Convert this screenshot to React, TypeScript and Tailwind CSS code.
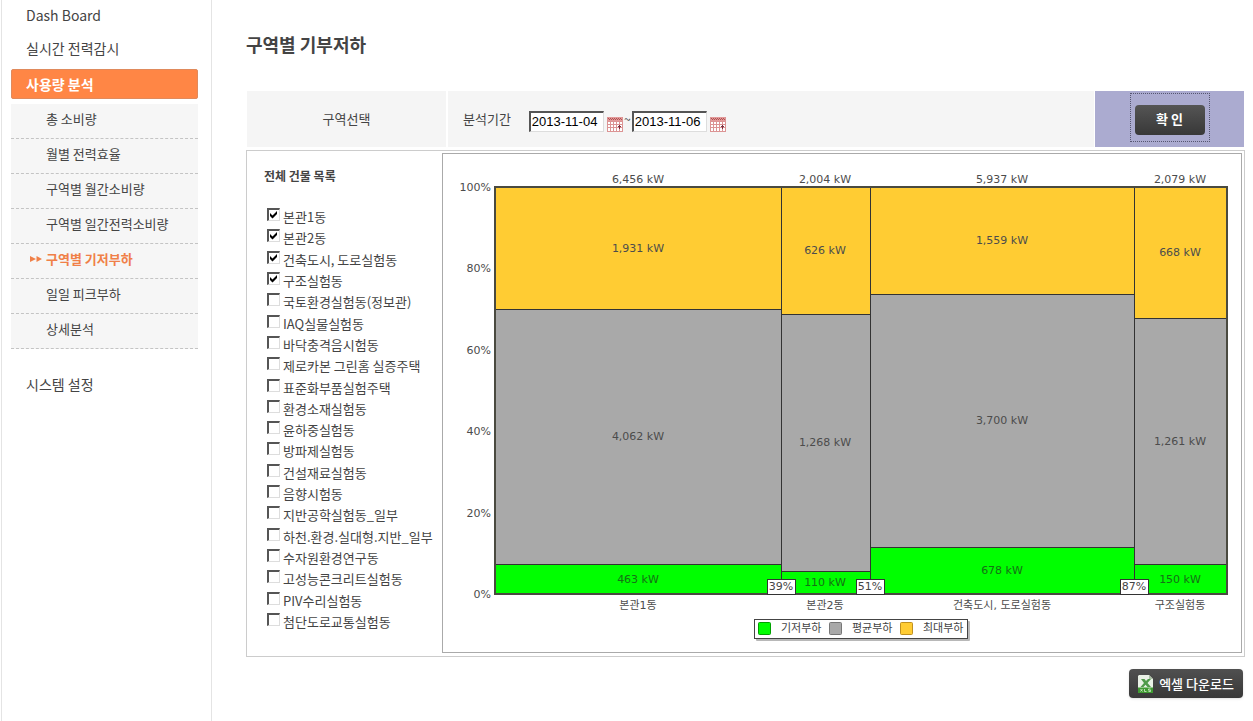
import { useState } from 'react';

type Area = { name: string; base: number; avg: number; max: number };

const AREAS: Area[] = [
  { name: '본관1동', base: 463, avg: 4062, max: 1931 },
  { name: '본관2동', base: 110, avg: 1268, max: 626 },
  { name: '건축도시, 도로실험동', base: 678, avg: 3700, max: 1559 },
  { name: '구조실험동', base: 150, avg: 1261, max: 668 },
];

const BUILDINGS = [
  '본관1동',
  '본관2동',
  '건축도시, 도로실험동',
  '구조실험동',
  '국토환경실험동(정보관)',
  'IAQ실물실험동',
  '바닥충격음시험동',
  '제로카본 그린홈 실증주택',
  '표준화부품실험주택',
  '환경소재실험동',
  '윤하중실험동',
  '방파제실험동',
  '건설재료실험동',
  '음향시험동',
  '지반공학실험동_일부',
  '하천.환경.실대형.지반_일부',
  '수자원환경연구동',
  '고성능콘크리트실험동',
  'PIV수리실험동',
  '첨단도로교통실험동',
];

const SUBMENU = [
  '총 소비량',
  '월별 전력효율',
  '구역별 월간소비량',
  '구역별 일간전력소비량',
  '구역별 기저부하',
  '일일 피크부하',
  '상세분석',
];

const LEGEND = [
  { label: '기저부하', fill: '#00ff00', stroke: '#00a000' },
  { label: '평균부하', fill: '#a9a9a9', stroke: '#777777' },
  { label: '최대부하', fill: '#ffcc33', stroke: '#c09020' },
];

const PLOT = { left: 52, top: 33, width: 732, height: 407 };

const kw = (n: number) => `${n.toLocaleString('en-US')} kW`;

function LoadChart() {
  const bottom = PLOT.top + PLOT.height;
  const right = PLOT.left + PLOT.width;
  const totals = AREAS.map((a) => a.base + a.avg + a.max);
  const sum = totals.reduce((a, b) => a + b, 0);
  let running = 0;
  const columns = AREAS.map((area, i) => {
    const x0 = Math.floor(PLOT.left + (running / sum) * PLOT.width);
    running += totals[i];
    const x1 = Math.floor(PLOT.left + (running / sum) * PLOT.width);
    const yMax = Math.round(PLOT.top + (area.max / totals[i]) * PLOT.height);
    const yBase = Math.floor(bottom - (area.base / totals[i]) * PLOT.height);
    return { area, total: totals[i], share: Math.round((running / sum) * 100), x0, x1, mid: Math.floor((x0 + x1) / 2), yMax, yBase };
  });

  return (
    <svg
      viewBox="0 0 798 498"
      className="block w-full font-['DejaVu_Sans','Noto_Sans_CJK_KR',sans-serif] text-[11px]"
      role="img"
      aria-label="구역별 기저부하"
    >
      {columns.map((c) => (
        <g key={c.area.name}>
          <g stroke="#333333" strokeWidth="1" shapeRendering="crispEdges">
            <rect x={c.x0} y={PLOT.top} width={c.x1 - c.x0} height={c.yMax - PLOT.top} fill="#ffcc33" />
            <rect x={c.x0} y={c.yMax} width={c.x1 - c.x0} height={c.yBase - c.yMax} fill="#a9a9a9" />
            <rect x={c.x0} y={c.yBase} width={c.x1 - c.x0} height={bottom - c.yBase} fill="#00ff00" />
          </g>
          <g textAnchor="middle" fill="#4c4c4c">
            <text x={c.mid} y={PLOT.top - 4}>{kw(c.total)}</text>
            <text x={c.mid} y={Math.floor((PLOT.top + c.yMax) / 2) + 4}>{kw(c.area.max)}</text>
            <text x={c.mid} y={Math.floor((c.yMax + c.yBase) / 2) + 4}>{kw(c.area.avg)}</text>
            <text x={c.mid} y={Math.floor((c.yBase + bottom) / 2) + 4} fill="#167016">{kw(c.area.base)}</text>
            <text x={c.mid} y={bottom + 15}>{c.area.name}</text>
          </g>
        </g>
      ))}
      <rect x={PLOT.left} y={PLOT.top} width={PLOT.width} height={PLOT.height} fill="none" stroke="#4a4a40" strokeWidth="2" shapeRendering="crispEdges" />
      {[0, 20, 40, 60, 80, 100].map((p) => (
        <text key={p} x={PLOT.left - 4} y={Math.round(bottom - (p / 100) * PLOT.height) + 4} textAnchor="end" fill="#4c4c4c">
          {p}%
        </text>
      ))}
      {columns.filter((c) => c.x1 < right).map((c) => (
        <g key={c.share}>
          <rect x={c.x1 - 14} y={bottom - 15} width="28" height="15" fill="#ffffff" stroke="#333333" shapeRendering="crispEdges" />
          <text x={c.x1} y={bottom - 4} textAnchor="middle" fill="#444444">{c.share}%</text>
        </g>
      ))}
      <rect x="313" y="467" width="214" height="20" rx="1" fill="#b8b8b8" />
      <rect x="311.5" y="465.5" width="213" height="19" fill="#ffffff" stroke="#444444" />
      {LEGEND.map((l, i) => (
        <g key={l.label}>
          <rect x={315.5 + i * 71} y="468.5" width="12" height="12" rx="1" fill={l.fill} stroke={l.stroke} />
          <text x={338 + i * 71} y="478" fill="#444444">{l.label}</text>
        </g>
      ))}
    </svg>
  );
}

function CalendarIcon() {
  return (
    <svg width="16" height="16" viewBox="0 0 16 16" shapeRendering="crispEdges" aria-hidden="true">
      <rect x="0" y="1" width="16" height="15" fill="#fff" />
      <rect x="0" y="1" width="16" height="4" fill="#e39a9a" />
      <path d="M1 2.5h14M0 3.5h15" stroke="#b05252" strokeDasharray="1 1" />
      <path d="M.5 1v15M3.5 5v10M6.5 5v10M9.5 5v10M12.5 5v10M15.5 1v15M0 5.5h16M0 8.5h16M0 11.5h16M0 15.5h16" stroke="#dc9494" fill="none" />
      <path d="M12.500 9v4M11 10.500h3" stroke="#7a3040" fill="none" />
    </svg>
  );
}

function ExcelIcon() {
  return (
    <svg width="15" height="18" viewBox="0 0 15 18" aria-hidden="true">
      <path d="M1 0h10l4 4v14H0V1z" fill="#e9f1e6" />
      <path d="M11 0l4 4h-4z" fill="#a9bda4" />
      <path d="M3 4h3.500l1.500 2 2-2h3l-3.500 4 3.500 4H9.500l-2-2.200L5.500 12H2.500L6 8z" fill="#4f9a4a" />
      <rect y="12.500" width="15" height="5.500" fill="#3f9a32" />
      <path d="M2.500 14l2 2.500m0-2.500l-2 2.500M6.500 14v2.500h2M12.500 14h-2v1.200h2v1.300h-2" stroke="#d8f0d0" strokeWidth=".8" fill="none" />
    </svg>
  );
}

function DateField({ label, value, onChange }: { label: string; value: string; onChange: (v: string) => void }) {
  return (
    <span className="mt-1 flex items-end gap-[3px]">
      <input
        type="text"
        aria-label={label}
        value={value}
        onChange={(e) => onChange(e.target.value)}
        className="h-[21px] w-[75px] border-t-2 border-r border-b border-l-2 border-t-[#555] border-r-[#ddd] border-b-[#ddd] border-l-[#555] bg-white pl-px font-['Liberation_Sans',sans-serif] text-[13px] text-black outline-none"
      />
      <button type="button" aria-label={`${label} 달력`} className="cursor-pointer">
        <CalendarIcon />
      </button>
    </span>
  );
}

export default function App() {
  const [checked, setChecked] = useState<string[]>(BUILDINGS.slice(0, 4));
  const [from, setFrom] = useState('2013-11-04');
  const [to, setTo] = useState('2013-11-06');
  const toggle = (name: string) =>
    setChecked((c) => (c.includes(name) ? c.filter((n) => n !== name) : [...c, name]));

  return (
    <div className="flex min-h-screen bg-white font-['Noto_Sans_CJK_KR',sans-serif] text-[#444]">
      <nav className="ml-px w-[211px] shrink-0 border-x border-[#e4e4e4] pr-[13px] pl-[9px] text-sm">
        <a href="#dashboard" className="block pl-[15px] leading-[30px]">Dash Board</a>
        <a href="#realtime" className="block pb-[3px] pl-[15px] leading-9">실시간 전력감시</a>
        <a href="#usage" className="block rounded-xs border border-[#e08a5c] bg-[#ff8645] pl-[14px] leading-7 font-bold text-white">사용량 분석</a>
        <ul className="mt-[5px] text-[13px]">
          {SUBMENU.map((item) => {
            const active = item === '구역별 기저부하';
            return (
              <li key={item} className="border-b border-dashed border-[#c4c4c4] bg-[#f6f6f6]">
                <a
                  href={`#${item}`}
                  className={active ? 'flex items-center gap-1 pb-1 pl-[19px] leading-[30px] font-bold text-[#f08048]' : 'block pb-1 pl-[35px] leading-[30px]'}
                >
                  {active && (
                    <svg width="12" height="8" viewBox="0 0 12 8" fill="#f08048" aria-hidden="true">
                      <path d="M0 1l6 3-6 3zM6.500 1l5.500 3-5.500 3z" />
                    </svg>
                  )}
                  {item}
                </a>
              </li>
            );
          })}
        </ul>
        <a href="#settings" className="mt-[17px] block pl-[15px] leading-9">시스템 설정</a>
      </nav>

      <main className="flex min-w-0 flex-1 flex-col pr-2 pb-5 pl-[34px]">
        <h1 className="pt-[30px] pb-px text-lg leading-7 font-bold">구역별 기부저하</h1>

        <form className="mt-8 mb-[3px] flex h-14 gap-px px-px" onSubmit={(e) => e.preventDefault()}>
          <div className="mr-px flex w-[199px] shrink-0 items-center justify-center bg-[#f5f5f5] text-[13px]">구역선택</div>
          <fieldset className="flex flex-1 items-center bg-[#f5f5f5] pl-[15px] text-[13px]">
            <span className="mr-[18px]">분석기간</span>
            <DateField label="시작일" value={from} onChange={setFrom} />
            <span className="w-[9px] text-center text-xs">~</span>
            <DateField label="종료일" value={to} onChange={setTo} />
          </fieldset>
          <div className="flex w-[149px] shrink-0 items-start justify-center bg-[#ababd0] pt-0.5">
            <div className="flex h-[49px] w-20 items-center justify-center border border-dotted border-[#555570] pt-1">
              <button type="submit" className="h-[30px] w-[70px] cursor-pointer rounded-sm bg-linear-to-b from-[#555] to-[#383838] pb-0.5 text-[13px] font-bold text-white">확 인</button>
            </div>
          </div>
        </form>

        <section className="flex border border-[#ccc] pt-0.5 pr-0.5 pb-[3px]">
          <div className="flex w-[195px] shrink-0 flex-col pb-[21px] pl-[17px]">
            <h2 className="pt-[13px] text-xs leading-5 font-bold">전체 건물 목록</h2>
            <ul className="mt-5 flex flex-1 flex-col justify-between text-[13px] leading-[21px]">
              {BUILDINGS.map((name) => (
                <li key={name}>
                  <label className="flex items-start gap-[3px] pl-[3px] whitespace-nowrap">
                    <span className="mt-0.5 grid size-[13px] shrink-0">
                      <input
                        type="checkbox"
                        checked={checked.includes(name)}
                        onChange={() => toggle(name)}
                        className="peer col-start-1 row-start-1 size-[13px] appearance-none border-t-2 border-r border-b border-l-2 border-t-[#555] border-r-[#ddd] border-b-[#ddd] border-l-[#555] bg-white"
                      />
                      <svg viewBox="0 0 13 13" className="pointer-events-none invisible col-start-1 row-start-1 size-[13px] peer-checked:visible" aria-hidden="true">
                        <path d="M3 5l2.500 2.500L10 3v3L5.500 10.500 3 8z" fill="#000" />
                      </svg>
                    </span>
                    {name}
                  </label>
                </li>
              ))}
            </ul>
          </div>
          <div className="min-w-0 flex-1 self-start border border-[#aaa]">
            <LoadChart />
          </div>
        </section>

        <button type="button" className="mt-3 mr-0.5 flex h-[29px] w-[114px] cursor-pointer items-center justify-center gap-[6px] self-end rounded-sm bg-linear-to-b from-[#505050] to-[#383838] text-[13px] font-medium whitespace-nowrap text-white shadow-sm">
          <ExcelIcon />
          엑셀 다운로드
        </button>
      </main>
    </div>
  );
}
